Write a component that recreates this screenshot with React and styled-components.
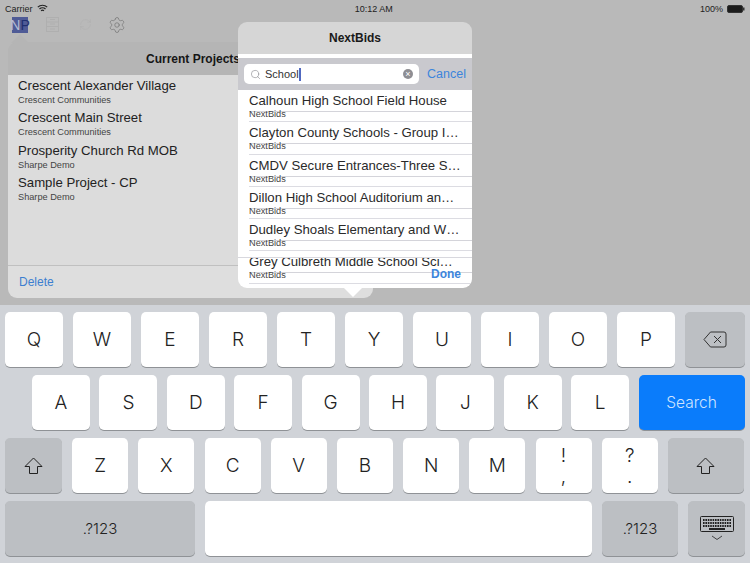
import React from "react";
import styled, { createGlobalStyle } from "styled-components";
import { Settings, RefreshCw, Search as SearchIcon } from "lucide-react";

const projects = [
  { name: "Crescent Alexander Village", owner: "Crescent Communities" },
  { name: "Crescent Main Street", owner: "Crescent Communities" },
  { name: "Prosperity Church Rd MOB", owner: "Sharpe Demo" },
  { name: "Sample Project - CP", owner: "Sharpe Demo" },
];

const bids = [
  "Calhoun High School Field House",
  "Clayton County Schools - Group I…",
  "CMDV Secure Entrances-Three S…",
  "Dillon High School Auditorium an…",
  "Dudley Shoals Elementary and W…",
  "Grey Culbreth Middle School Sci…",
];

const GlobalStyle = createGlobalStyle`
  html, body {
    margin: 0;
    padding: 0;
    background: #b8b8b8;
  }
  * {
    box-sizing: border-box;
  }
`;

const Page = styled.div`
  width: 750px;
  height: 563px;
  overflow: hidden;
  display: flex;
  flex-direction: column;
  font-family: "Liberation Sans", Arial, sans-serif;
  color: #1c1c1c;
`;

const Screen = styled.div`
  position: relative;
  height: 305px;
  background: #b9b9b9;
`;

const StatusBar = styled.div`
  height: 16px;
  padding: 1px 5px 0;
  display: flex;
  align-items: center;
  justify-content: space-between;
  font-size: 9px;
  color: #222;
`;

const StatusSide = styled.div`
  display: flex;
  align-items: center;
  gap: 4px;
`;

const Toolbar = styled.div`
  height: 17px;
  display: flex;
  align-items: center;
  padding-left: 12px;
`;

const Logo = styled.div`
  width: 16px;
  height: 16px;
  background: #4f5b96;
  font-size: 14px;
  line-height: 16px;
  display: flex;
  justify-content: center;
  color: #b4bad2;
  span {
    color: #1f2f70;
  }
`;

const ToolIcon = styled.div`
  display: flex;
  margin-left: ${(p) => p.$gap}px;
  color: ${(p) => p.$color};
`;

const Popover = styled.div`
  position: absolute;
  left: ${(p) => p.$left}px;
  top: ${(p) => p.$top}px;
  width: ${(p) => p.$width}px;
  height: ${(p) => p.$height}px;
  border-radius: 9px;
  display: flex;
  flex-direction: column;
`;

const Arrow = styled.div`
  position: absolute;
  left: ${(p) => p.$left}px;
  ${(p) => (p.$up ? "top: -8px;" : "bottom: -9px;")}
  width: 0;
  height: 0;
  border-left: 9px solid transparent;
  border-right: 9px solid transparent;
  ${(p) => (p.$up ? "border-bottom" : "border-top")}: 9px solid ${(p) => p.$color};
`;

const ProjectHeader = styled.div`
  height: 33px;
  flex: none;
  background: #b5b5b5;
  border-radius: 9px 9px 0 0;
  font-size: 12px;
  font-weight: bold;
  color: #161616;
  display: flex;
  align-items: center;
  justify-content: flex-end;
  padding-right: 133px;
`;

const ProjectBody = styled.div`
  flex: 1;
  background: #dcdcdc;
  padding: 3px 0 0 10px;
`;

const ProjectRow = styled.div`
  height: 32.3px;
`;

const ProjectName = styled.div`
  font-size: 13.2px;
  line-height: 16px;
  color: #222;
`;

const Owner = styled.div`
  font-size: 9.2px;
  line-height: 10px;
  margin-top: 1px;
  color: #444;
`;

const ProjectFooter = styled.div`
  height: 33px;
  flex: none;
  background: #dedede;
  border-top: 1px solid #c0c0c0;
  border-radius: 0 0 9px 9px;
  padding: 9px 0 0 11px;
  font-size: 12px;
  color: #3c7fd0;
`;

const BidsHeader = styled.div`
  height: 32px;
  flex: none;
  background: #d6d6d6;
  border-radius: 9px 9px 0 0;
  font-size: 12px;
  font-weight: bold;
  color: #1a1a1a;
  display: flex;
  align-items: center;
  justify-content: center;
`;

const BidsBody = styled.div`
  position: relative;
  flex: 1;
  min-height: 0;
  background: #fff;
  border-radius: 0 0 9px 9px;
  padding-top: 4px;
  display: flex;
  flex-direction: column;
`;

const SearchBar = styled.div`
  height: 32px;
  flex: none;
  background: #c9c9ce;
  display: flex;
  align-items: center;
  padding: 0 6px;
  gap: 8px;
`;

const SearchField = styled.div`
  width: 175px;
  height: 20px;
  background: #fff;
  border-radius: 5px;
  display: flex;
  align-items: center;
  padding: 0 6px;
  font-size: 11px;
  color: #333;
`;

const Caret = styled.span`
  display: inline-block;
  width: 2px;
  height: 13px;
  background: #5068c0;
`;

const Query = styled.div`
  flex: 1;
  display: flex;
  align-items: center;
  margin-left: 4px;
`;

const ClearButton = styled.div`
  width: 10px;
  height: 10px;
  border-radius: 50%;
  background: #8e8e93;
  color: #fff;
  font-size: 9px;
  line-height: 10px;
  text-align: center;
`;

const Cancel = styled.div`
  font-size: 12.5px;
  color: #3c85dc;
`;

const BidList = styled.div`
  flex: 1;
  overflow: hidden;
  position: relative;
  border-radius: 0 0 9px 9px;
  &::after {
    content: "";
    position: absolute;
    left: 0;
    right: 0;
    top: 167px;
    height: 1px;
    background: #d8d8de;
  }
`;

const BidRow = styled.div`
  position: relative;
  height: 32.3px;
  margin-left: 11px;
  border-bottom: 1px solid #dcdce2;
  &::after {
    content: "";
    position: absolute;
    left: 0;
    right: 0;
    top: 21px;
    height: 1px;
    background: #d4d4da;
  }
`;

const BidName = styled.div`
  font-size: 13.2px;
  line-height: 16px;
  padding-top: 3px;
  white-space: nowrap;
  color: #2a2a2a;
`;

const BidOwner = styled.div`
  position: relative;
  z-index: 1;
  font-size: 9.2px;
  line-height: 10px;
  color: #444;
`;

const Done = styled.div`
  position: absolute;
  right: 11px;
  bottom: 7px;
  font-size: 12px;
  font-weight: bold;
  color: #3c85dc;
`;

const Keyboard = styled.div`
  flex: 1;
  background: #d0d3d8;
  padding: 7px 5px 0;
  display: grid;
  grid-template-rows: repeat(4, 55px);
  row-gap: 8px;
  align-content: start;
`;

const KeyRow = styled.div`
  display: flex;
  gap: ${(p) => p.$gap}px;
  padding-left: ${(p) => p.$pad || 0}px;
`;

const Key = styled.div`
  width: ${(p) => p.$w}px;
  flex: none;
  border-radius: 5px;
  background: ${(p) => (p.$blue ? "#0a7cfb" : p.$dark ? "#bcbfc3" : "#fff")};
  color: ${(p) => (p.$blue ? "#cfe4ff" : "#222")};
  box-shadow: 0 1px 0 #8f9296;
  display: flex;
  flex-direction: column;
  align-items: center;
  justify-content: center;
  font-family: Inter, "Liberation Sans", sans-serif;
  font-weight: 300;
  font-size: ${(p) => p.$size || 19}px;
  line-height: 1;
`;

const Stacked = styled.span`
  font-size: 19px;
  line-height: 21px;
`;

const Wifi = () => (
  <svg width="11" height="9" viewBox="0 0 11 9" fill="none" stroke="#222" strokeWidth="1.2">
    <path d="M.8 3.2a6.6 6.6 0 0 1 9.4 0" />
    <path d="M2.5 5a4.2 4.2 0 0 1 6 0" />
    <path d="M4.1 6.7a2 2 0 0 1 2.8 0" />
  </svg>
);

const Battery = () => (
  <svg width="18" height="8" viewBox="0 0 18 8">
    <rect x=".5" y=".5" width="15" height="7" rx="1.5" fill="#1c1c1c" stroke="#333" />
    <rect x="16" y="2.5" width="1.5" height="3" fill="#333" />
  </svg>
);

const FormIcon = () => (
  <svg width="14" height="15" viewBox="0 0 14 15" fill="none" stroke="#afafaf">
    <rect x=".5" y=".5" width="12" height="14" />
    <path d="M.5 5h12M.5 9.5h12M4 2.5h5M4 7h5M4 12h5" />
  </svg>
);

const ShiftIcon = () => (
  <svg width="19" height="18" viewBox="0 0 19 18" fill="none" stroke="#222" strokeWidth="1">
    <path d="M9.5 1 1 9.5h4.5v7h8v-7H18z" strokeLinejoin="round" />
  </svg>
);

const BackspaceIcon = () => (
  <svg width="24" height="17" viewBox="0 0 24 17" fill="none" stroke="#333" strokeWidth="1">
    <path d="M7.5 1H21a2 2 0 0 1 2 2v11a2 2 0 0 1-2 2H7.5L1 8.5z" strokeLinejoin="round" />
    <path d="m11 5 7 7M18 5l-7 7" />
  </svg>
);

const KeyboardIcon = () => (
  <svg width="34" height="26" viewBox="0 0 34 26" fill="none" stroke="#222">
    <rect x=".5" y=".5" width="33" height="15" rx="1" />
    <path d="M3 4h28M3 7h28M3 10h28" strokeDasharray="1.6 .8" strokeWidth="2" />
    <path d="M9 13h16" strokeWidth="2" />
    <path d="m12 20 5 3.5 5-3.5" strokeWidth=".8" />
  </svg>
);

const letterKeys = (letters, w) =>
  letters.split("").map((l) => (
    <Key key={l} $w={w}>
      {l}
    </Key>
  ));

const App = () => {
  return (
    <Page>
      <GlobalStyle />
      <Screen>
        <StatusBar>
          <StatusSide>
            Carrier <Wifi />
          </StatusSide>
          <div>10:12 AM</div>
          <StatusSide>
            100% <Battery />
          </StatusSide>
        </StatusBar>
        <Toolbar>
          <Logo>
            N<span>P</span>
          </Logo>
          <ToolIcon $gap={18} $color="#afafaf">
            <FormIcon />
          </ToolIcon>
          <ToolIcon $gap={19} $color="#afafaf">
            <RefreshCw size={13} strokeWidth={1} />
          </ToolIcon>
          <ToolIcon $gap={16} $color="#777">
            <Settings size={18} strokeWidth={1} />
          </ToolIcon>
        </Toolbar>

        <Popover $left={8} $top={42} $width={365} $height={256}>
          <Arrow $up $left={3} $color="#b5b5b5" />
          <ProjectHeader>Current Projects</ProjectHeader>
          <ProjectBody>
            {projects.map((p) => (
              <ProjectRow key={p.name}>
                <ProjectName>{p.name}</ProjectName>
                <Owner>{p.owner}</Owner>
              </ProjectRow>
            ))}
          </ProjectBody>
          <ProjectFooter>Delete</ProjectFooter>
        </Popover>

        <Popover $left={238} $top={22} $width={234} $height={266}>
          <Arrow $left={106} $color="#fff" />
          <BidsHeader>NextBids</BidsHeader>
          <BidsBody>
            <SearchBar>
              <SearchField>
                <SearchIcon size={11} strokeWidth={1.4} color="#8e8e93" />
                <Query>
                  School
                  <Caret />
                </Query>
                <ClearButton>×</ClearButton>
              </SearchField>
              <Cancel>Cancel</Cancel>
            </SearchBar>
            <BidList>
              {bids.map((b) => (
                <BidRow key={b}>
                  <BidName>{b}</BidName>
                  <BidOwner>NextBids</BidOwner>
                </BidRow>
              ))}
            </BidList>
            <Done>Done</Done>
          </BidsBody>
        </Popover>
      </Screen>

      <Keyboard>
        <KeyRow $gap={10}>
          {letterKeys("QWERTYUIOP", 58)}
          <Key $w={60} $dark>
            <BackspaceIcon />
          </Key>
        </KeyRow>
        <KeyRow $gap={9.4} $pad={27}>
          {letterKeys("ASDFGHJKL", 58)}
          <Key $w={106} $blue $size={15.5}>
            Search
          </Key>
        </KeyRow>
        <KeyRow $gap={10.2}>
          <Key $w={57} $dark>
            <ShiftIcon />
          </Key>
          {letterKeys("ZXCVBNM", 56)}
          <Key $w={56}>
            <Stacked>!</Stacked>
            <Stacked>,</Stacked>
          </Key>
          <Key $w={56}>
            <Stacked>?</Stacked>
            <Stacked>.</Stacked>
          </Key>
          <Key $w={76} $dark>
            <ShiftIcon />
          </Key>
        </KeyRow>
        <KeyRow $gap={10}>
          <Key $w={190} $dark $size={15}>
            .?123
          </Key>
          <Key $w={387} />
          <Key $w={76} $dark $size={15}>
            .?123
          </Key>
          <Key $w={57} $dark>
            <KeyboardIcon />
          </Key>
        </KeyRow>
      </Keyboard>
    </Page>
  );
};

export default App;
